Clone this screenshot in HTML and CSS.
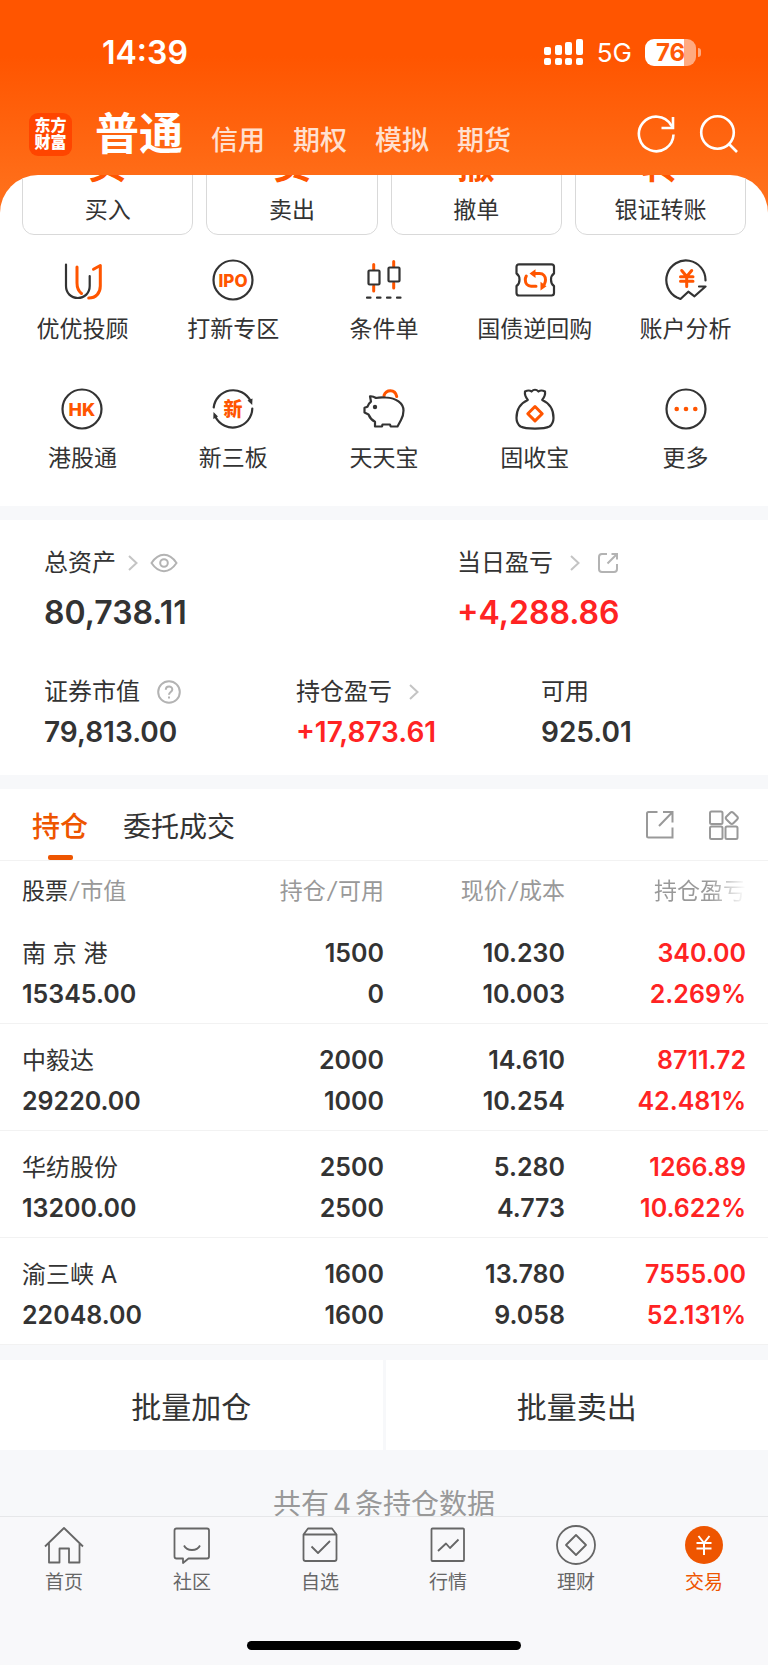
FILE: index.html
```
<!DOCTYPE html>
<html lang="zh-CN">
<head>
    <meta charset="UTF-8">
    <meta name="viewport" content="width=device-width, initial-scale=1.0">
    <title>东方财富 - 交易</title>
    <link rel="stylesheet" href="styles.css">
</head>
<body>
    <header class="header">
        <div class="status-bar">
            <span class="status-time">14:39</span>
            <div class="status-right">
                <svg class="signal" width="40" height="28" viewBox="0 0 40 28" fill="#fff">
                    <rect x="0" y="9" width="7" height="8" rx="2"/>
                    <rect x="11" y="7" width="7" height="10" rx="2"/>
                    <rect x="21" y="4" width="7" height="13" rx="2"/>
                    <rect x="32" y="1" width="7" height="16" rx="2"/>
                    <rect x="0" y="20" width="7" height="7" rx="2"/>
                    <rect x="11" y="20" width="7" height="7" rx="2"/>
                    <rect x="21" y="20" width="7" height="7" rx="2"/>
                    <rect x="32" y="20" width="7" height="7" rx="2"/>
                </svg>
                <span class="network">5G</span>
                <div class="battery"><span class="battery-level">76</span></div>
            </div>
        </div>
        <div class="nav">
            <div class="logo"><span>东方</span><span>财富</span></div>
            <nav class="nav-tabs">
                <a class="nav-tab active" href="#">普通</a>
                <a class="nav-tab" href="#">信用</a>
                <a class="nav-tab" href="#">期权</a>
                <a class="nav-tab" href="#">模拟</a>
                <a class="nav-tab" href="#">期货</a>
            </nav>
            <div class="nav-actions">
                <button class="icon-button" type="button" aria-label="刷新">
                    <svg width="40" height="40" viewBox="0 0 40 40" fill="none" stroke="#fff" stroke-width="2.6">
                        <path d="M36.5 20.5A17.3 17.3 0 1 1 34 11L36 13.5"/>
                        <path d="M36 3v11H24.5"/>
                    </svg>
                </button>
                <button class="icon-button" type="button" aria-label="搜索">
                    <svg width="40" height="40" viewBox="0 0 40 40" fill="none" stroke="#fff" stroke-width="2.6">
                        <circle cx="18.5" cy="18.5" r="16.3"/>
                        <path d="M29.5 29.5l8.5 8.5"/>
                    </svg>
                </button>
            </div>
        </div>
    </header>

    <main class="sheet">
        <section class="trade">
            <button class="trade-button" type="button"><b>买</b><span>买入</span></button>
            <button class="trade-button" type="button"><b>卖</b><span>卖出</span></button>
            <button class="trade-button" type="button"><b>撤</b><span>撤单</span></button>
            <button class="trade-button" type="button"><b>转</b><span>银证转账</span></button>
        </section>

        <section class="menu">
            <a class="menu-item" href="#">
                <svg class="menu-icon" viewBox="0 0 44 44">
                    <path d="M6 6.5V28C6 35 11 40 17.8 40S29.7 35 29.7 28V18"/>
                    <path class="accent" d="M17 9v16c0 4 1.3 8 4.5 10.5M33.5 11.3L40.3 7.5V28c0 7-4.3 12-11.6 12"/>
                </svg>
                <span>优优投顾</span>
            </a>
            <a class="menu-item" href="#">
                <svg class="menu-icon" viewBox="0 0 44 44">
                    <circle cx="22" cy="22" r="19.5"/>
                    <text x="22" y="28.5" font-size="17">IPO</text>
                </svg>
                <span>打新专区</span>
            </a>
            <a class="menu-item" href="#">
                <svg class="menu-icon" viewBox="0 0 44 44">
                    <path class="accent" d="M11.7 6.5v5M11.7 28v5M31.7 3.5v5M31.7 25v5"/>
                    <rect x="6.5" y="12.5" width="11" height="14" rx="1"/>
                    <rect x="26.5" y="9.5" width="11" height="14" rx="1"/>
                    <path d="M5 39.7h3.5M15 39.7h3.5M25 39.7h3.5M35 39.7h3.5"/>
                </svg>
                <span>条件单</span>
            </a>
            <a class="menu-item" href="#">
                <svg class="menu-icon" viewBox="0 0 44 44">
                    <path d="M6 6.3H38.5Q41 6.3 41 8.8V15.5C37 18 37 25.5 41 28V35Q41 37.5 38.5 37.5H6Q3.5 37.5 3.5 35V28C7.5 25.5 7.5 18 3.5 15.5V8.8Q3.5 6.3 6 6.3Z"/>
                    <path class="accent" d="M21 15.6h5.5c4 0 6 2.8 6 6.2 0 1.6-.4 2.8-1 4M23 28.2h-5c-3.5 0-5.7-3-5.7-6.4 0-1.5.4-2.6 1-3.8"/>
                    <path class="accent-fill" d="M16.5 15.6l6-4.4v8.8zM27.5 23.8v8.8l6-4.4z"/>
                </svg>
                <span>国债逆回购</span>
            </a>
            <a class="menu-item" href="#">
                <svg class="menu-icon" viewBox="0 0 44 44">
                    <path d="M41.5 22.5A19.6 19.6 0 1 0 13 39.5L16.5 41 24.3 33.7l6.2 4.6L41.5 28.5H35"/>
                    <path class="accent" d="M17.7 12.5l5 6 5-6M16.5 18.7h12.5M16.5 23.3h12.5M22.7 18.5V28.5"/>
                </svg>
                <span>账户分析</span>
            </a>
            <a class="menu-item" href="#">
                <svg class="menu-icon" viewBox="0 0 44 44">
                    <circle cx="22" cy="22" r="19.5"/>
                    <text x="22" y="28.5" font-size="18">HK</text>
                </svg>
                <span>港股通</span>
            </a>
            <a class="menu-item" href="#">
                <svg class="menu-icon" viewBox="0 0 44 44">
                    <path d="M2.7 20.5A19.5 19.5 0 0 1 39.5 14M41.3 21.5A19.5 19.5 0 0 1 4.5 30"/>
                    <path class="dark-fill" d="M36.5 13.5L41.5 11.5 41.2 18zM2.3 32L2.5 25 7 29.5z"/>
                    <text x="22" y="29" font-size="19">新</text>
                </svg>
                <span>新三板</span>
            </a>
            <a class="menu-item" href="#">
                <svg class="menu-icon" viewBox="0 0 44 44">
                    <path class="accent" d="M22 8.5c1-3 3.5-4.8 6.5-4.8s5.5 2.3 6.2 5.8"/>
                    <path d="M8 9.3Q11 9 14 11Q18 10 24 10.5C34 11 41.5 16 41.5 23.5Q41.5 28.5 39 33L35.5 39.5H28.7L28 37.5H20.5L20 39.5H13V34.7Q8.5 32.5 6.5 27.5L2.5 25.5V20.7L5.5 19.7Q6.5 16.5 9 14.7Z"/>
                    <circle class="dark-fill" cx="13" cy="20" r="2.2"/>
                </svg>
                <span>天天宝</span>
            </a>
            <a class="menu-item" href="#">
                <svg class="menu-icon" viewBox="0 0 44 44">
                    <path d="M14.8 13C12.5 10 11.5 7.5 12 4.5Q16 2.5 18.5 4.5Q22 1 25.5 4.5Q28 2.5 32 4.5C32.5 7.5 31.5 10 29.2 13C36 16 40.5 21.5 40.5 31Q40.5 36.5 36.5 39.5C31 42.3 13 42.3 7.5 39.5Q3.5 36.5 3.5 31C3.5 21.5 8 16 14.8 13Z"/>
                    <path class="accent" d="M22 19.5l7.2 7.2-7.2 7.2-7.2-7.2z"/>
                </svg>
                <span>固收宝</span>
            </a>
            <a class="menu-item" href="#">
                <svg class="menu-icon" viewBox="0 0 44 44">
                    <circle cx="22" cy="22" r="19.5"/>
                    <g class="accent-fill">
                        <circle cx="12.7" cy="22" r="2.3"/>
                        <circle cx="22" cy="22" r="2.3"/>
                        <circle cx="31.3" cy="22" r="2.3"/>
                    </g>
                </svg>
                <span>更多</span>
            </a>
        </section>

        <section class="assets">
            <div class="assets-row assets-main">
                <div class="asset">
                    <div class="asset-label">
                        <span>总资产</span>
                        <svg class="chevron" width="10" height="16" viewBox="0 0 10 16"><path d="M1 1l7.5 7L1 15"/></svg>
                        <svg class="asset-icon" width="28" height="24" viewBox="0 0 28 24">
                            <path d="M1.5 12Q7 3.8 14 3.8T26.5 12Q21 20.2 14 20.2T1.5 12Z"/>
                            <circle cx="14" cy="12" r="3.8"/>
                        </svg>
                    </div>
                    <strong class="asset-value">80,738.11</strong>
                </div>
                <div class="asset">
                    <div class="asset-label wide">
                        <span>当日盈亏</span>
                        <svg class="chevron" width="10" height="16" viewBox="0 0 10 16"><path d="M1 1l7.5 7L1 15"/></svg>
                        <svg class="asset-icon" width="22" height="22" viewBox="0 0 22 22">
                            <path d="M10 2H5Q2 2 2 5V17Q2 20 5 20H17Q20 20 20 17V12M14.5 2H20V7.5M20 2L10.5 11.5"/>
                        </svg>
                    </div>
                    <strong class="asset-value red">+4,288.86</strong>
                </div>
            </div>
            <div class="assets-row assets-sub">
                <div class="asset">
                    <div class="asset-label wide">
                        <span>证券市值</span>
                        <svg class="asset-icon" width="24" height="24" viewBox="0 0 24 24">
                            <circle cx="12" cy="12" r="10.8"/>
                            <path d="M8.8 9.8c0-4.2 6.5-4.2 6.5-.3 0 2.5-3.3 2.5-3.3 5.2M12 16.5v2"/>
                        </svg>
                    </div>
                    <strong class="asset-value">79,813.00</strong>
                </div>
                <div class="asset">
                    <div class="asset-label wide">
                        <span>持仓盈亏</span>
                        <svg class="chevron" width="10" height="16" viewBox="0 0 10 16"><path d="M1 1l7.5 7L1 15"/></svg>
                    </div>
                    <strong class="asset-value red">+17,873.61</strong>
                </div>
                <div class="asset">
                    <div class="asset-label"><span>可用</span></div>
                    <strong class="asset-value">925.01</strong>
                </div>
            </div>
        </section>

        <section class="holdings">
            <div class="tabs">
                <button class="tab active" type="button">持仓</button>
                <button class="tab" type="button">委托成交</button>
                <div class="tab-actions">
                    <button class="icon-button" type="button" aria-label="分享">
                        <svg width="30" height="30" viewBox="0 0 30 30" fill="none" stroke="#999" stroke-width="2">
                            <path d="M12.5 2H3.5Q2 2 2 3.5V26Q2 27.5 3.5 27.5H27.5V17.5M18 2H27.5V12.5M27.5 2L14 16"/>
                        </svg>
                    </button>
                    <button class="icon-button" type="button" aria-label="布局">
                        <svg width="30" height="30" viewBox="0 0 30 30" fill="none" stroke="#999" stroke-width="2">
                            <rect x="1" y="1.5" width="12.5" height="12.5" rx="1.5"/>
                            <rect x="1" y="16.5" width="12.5" height="12.5" rx="1.5"/>
                            <rect x="16.5" y="16.5" width="12" height="12.5" rx="1.5"/>
                            <path d="M21.3 2.7Q22.8 1.2 24.3 2.7L28.1 6.5Q29.6 8 28.1 9.5L24.3 13.3Q22.8 14.8 21.3 13.3L17.5 9.5Q16 8 17.5 6.5Z"/>
                        </svg>
                    </button>
                </div>
            </div>
            <table class="stocks">
                <thead>
                    <tr>
                        <th><em>股票</em><i>/</i>市值</th>
                        <th>持仓<i>/</i>可用</th>
                        <th>现价<i>/</i>成本</th>
                        <th><span class="fade">持仓盈亏</span></th>
                    </tr>
                </thead>
                <tbody>
                    <tr>
                        <td><span class="name">南 京 港</span><span>15345.00</span></td>
                        <td><span>1500</span><span>0</span></td>
                        <td><span>10.230</span><span>10.003</span></td>
                        <td class="red"><span>340.00</span><span>2.269%</span></td>
                    </tr>
                    <tr>
                        <td><span class="name">中毅达</span><span>29220.00</span></td>
                        <td><span>2000</span><span>1000</span></td>
                        <td><span>14.610</span><span>10.254</span></td>
                        <td class="red"><span>8711.72</span><span>42.481%</span></td>
                    </tr>
                    <tr>
                        <td><span class="name">华纺股份</span><span>13200.00</span></td>
                        <td><span>2500</span><span>2500</span></td>
                        <td><span>5.280</span><span>4.773</span></td>
                        <td class="red"><span>1266.89</span><span>10.622%</span></td>
                    </tr>
                    <tr>
                        <td><span class="name">渝三峡 A</span><span>22048.00</span></td>
                        <td><span>1600</span><span>1600</span></td>
                        <td><span>13.780</span><span>9.058</span></td>
                        <td class="red"><span>7555.00</span><span>52.131%</span></td>
                    </tr>
                </tbody>
            </table>
        </section>

        <div class="batch">
            <button class="batch-button" type="button">批量加仓</button>
            <button class="batch-button" type="button">批量卖出</button>
        </div>
        <p class="summary">共有<span class="count">4</span>条持仓数据</p>
    </main>

    <footer class="footer">
        <nav class="tab-bar">
            <a class="tab-item" href="#">
                <svg viewBox="0 0 40 40">
                    <path d="M1 21.5L20 3l19 18.5M5 18v19.5H15.5V23.5H25V37.5H35.5V18"/>
                </svg>
                <span>首页</span>
            </a>
            <a class="tab-item" href="#">
                <svg viewBox="0 0 40 40">
                    <path d="M4.5 3.5H35Q37 3.5 37 5.5V31.5Q37 33.5 35 33.5H16.5L11 38V33.5H4.5Q2.5 33.5 2.5 31.5V5.5Q2.5 3.5 4.5 3.5ZM12 20.5C15 26.5 25 26.5 28 20.5"/>
                </svg>
                <span>社区</span>
            </a>
            <a class="tab-item" href="#">
                <svg viewBox="0 0 40 40">
                    <path d="M3.5 9.5L8 3.5H32L36.5 9.5V34Q36.5 36 34.5 36H5.5Q3.5 36 3.5 34ZM3.5 9.5H36.5M11.5 21.5L18 28 30 16"/>
                </svg>
                <span>自选</span>
            </a>
            <a class="tab-item" href="#">
                <svg viewBox="0 0 40 40">
                    <rect x="3.5" y="3.5" width="32.5" height="32.5" rx="1"/>
                    <path d="M10 26l8-7.5 4 4.5L30.5 14.5"/>
                </svg>
                <span>行情</span>
            </a>
            <a class="tab-item" href="#">
                <svg viewBox="0 0 40 40">
                    <circle cx="20" cy="20" r="19"/>
                    <path d="M20 10l10 10-10 10-10-10z"/>
                </svg>
                <span>理财</span>
            </a>
            <a class="tab-item active" href="#">
                <svg viewBox="0 0 40 40">
                    <circle class="coin" cx="20" cy="20" r="19"/>
                    <path class="yen" d="M14.5 11L20 18l5.5-7M12.5 18h15M12.5 23.5h15M20 18v12"/>
                </svg>
                <span>交易</span>
            </a>
        </nav>
        <div class="home-indicator"></div>
    </footer>
</body>
</html>
```
FILE: styles.css
```
* {
    box-sizing: border-box;
}

body {
    margin: 0;
    background: #f7f8fa linear-gradient(#ff5500 56px, #ff6f1a 190px) no-repeat;
    background-size: 100% 240px;
    color: #333;
    font-family: Inter, "Noto Sans CJK SC", sans-serif;
    font-size: 23px;
}

a {
    color: inherit;
    text-decoration: none;
}

button {
    padding: 0;
    border: none;
    background: none;
    color: inherit;
    font: inherit;
    cursor: pointer;
}

svg {
    display: block;
    flex-shrink: 0;
}

.red {
    color: #ff2323;
}

/* Status bar */

.status-bar {
    display: flex;
    justify-content: space-between;
    align-items: center;
    height: 104px;
    padding: 0 72px 0 102px;
    color: #fff;
}

.status-time {
    font-size: 32px;
    font-weight: 600;
}

.status-right {
    display: flex;
    align-items: center;
    gap: 13px;
}

.network {
    font-size: 26px;
}

.battery {
    position: relative;
    width: 51px;
    height: 27px;
    border-radius: 9px;
    background: linear-gradient(to right, #fff 76%, #ffaa80 76%);
    color: #ff5a08;
    font-size: 24px;
    font-weight: 700;
    line-height: 27px;
    text-align: center;
}

.battery::after {
    content: "";
    position: absolute;
    top: 9px;
    right: -5px;
    width: 3px;
    height: 9px;
    border-radius: 0 4px 4px 0;
    background: #ffaa80;
}

/* Top navigation */

.nav {
    display: flex;
    align-items: center;
    height: 60px;
    margin-bottom: 11px;
    padding: 0 29px;
    color: #fff;
}

.logo {
    display: flex;
    flex-direction: column;
    justify-content: center;
    align-items: center;
    width: 43px;
    height: 43px;
    border-radius: 9px;
    background: #ff4500;
    font-size: 16px;
    font-weight: 900;
    line-height: 17px;
}

.nav-tabs {
    display: flex;
    align-items: baseline;
    flex: 1;
    gap: 28px;
    margin-left: 23px;
}

.nav-tab {
    color: #ffe0d0;
    font-size: 27px;
    font-weight: 500;
    line-height: 30px;
}

.nav-tab.active {
    color: #fff;
    font-size: 44px;
    font-weight: 700;
    line-height: 48px;
}

.nav-actions {
    display: flex;
    gap: 22px;
}

/* White sheet below the header */

.sheet {
    overflow: hidden;
    border-radius: 38px 38px 0 0;
    background: #fff;
}

.trade {
    display: grid;
    grid-template-columns: repeat(4, 1fr);
    gap: 13px;
    margin-top: -40px;
    padding: 0 22px;
}

.trade-button {
    display: flex;
    flex-direction: column;
    align-items: center;
    height: 100px;
    border: 1px solid #d9d9d9;
    border-radius: 12px;
    line-height: 34px;
}

.trade-button b {
    margin-bottom: 9px;
    padding-top: 8px;
    color: #ff5500;
    font-size: 38px;
    line-height: 40px;
}

.menu {
    display: grid;
    grid-template-columns: repeat(5, 1fr);
    row-gap: 43px;
    padding: 23px 7px 33px;
}

.menu-item {
    display: flex;
    flex-direction: column;
    align-items: center;
    gap: 13px;
    line-height: 29px;
}

.menu-icon {
    width: 44px;
    height: 44px;
    fill: none;
    stroke: #333;
    stroke-width: 2.2;
    stroke-linecap: round;
    stroke-linejoin: round;
}

.menu-icon .accent {
    stroke: #ff5500;
    stroke-width: 3;
}

.menu-icon .accent-fill {
    fill: #ff5500;
    stroke: none;
}

.menu-icon .dark-fill {
    fill: #333;
    stroke: none;
}

.menu-icon text {
    fill: #ff5500;
    stroke: none;
    font-weight: 800;
    text-anchor: middle;
}

/* Assets */

.assets {
    padding: 25px 44px;
    border-top: 14px solid #f7f8fa;
    border-bottom: 14px solid #f7f8fa;
}

.assets-row {
    display: grid;
}

.assets-main {
    grid-template-columns: 413px 1fr;
    margin-bottom: 41px;
}

.assets-sub {
    grid-template-columns: 252px 245px 1fr;
}

.asset-label {
    display: flex;
    align-items: center;
    gap: 12px;
    height: 36px;
    font-size: 24px;
    line-height: 36px;
}

.asset-label.wide {
    gap: 17px;
}

.asset-value {
    display: block;
    font-weight: 600;
}

.assets-main .asset-value {
    margin-top: 12px;
    font-size: 32px;
    line-height: 40px;
}

.assets-sub .asset-value {
    margin-top: 4px;
    font-size: 28px;
    line-height: 36px;
}

.chevron {
    fill: none;
    stroke: #c4c4c4;
    stroke-width: 2;
}

.asset-icon {
    fill: none;
    stroke: #b3b3b3;
    stroke-width: 2;
}

/* Holdings */

.tabs {
    display: flex;
    align-items: center;
    gap: 35px;
    height: 72px;
    padding: 0 29px 0 32px;
    border-bottom: 1px solid #f2f2f2;
}

.tab {
    position: relative;
    height: 71px;
    font-size: 28px;
}

.tab.active {
    color: #ee5500;
    font-weight: 500;
}

.tab.active::after {
    content: "";
    position: absolute;
    bottom: 0;
    left: 50%;
    width: 25px;
    height: 5px;
    margin-left: -12px;
    border-radius: 2px;
    background: #ee5500;
}

.tab-actions {
    display: flex;
    gap: 34px;
    margin-left: auto;
}

.stocks {
    width: 100%;
    border-collapse: collapse;
    table-layout: fixed;
}

.stocks th {
    height: 56px;
    padding: 0;
    color: #999;
    font-size: 23px;
    font-weight: 400;
    text-align: right;
    white-space: nowrap;
}

.stocks em {
    color: #333;
    font-style: normal;
}

.stocks i {
    margin: 0 2px;
}

.stocks td {
    padding: 16px 0 8px;
    border-bottom: 1px solid #f2f2f2;
    font-size: 25px;
    font-weight: 600;
    line-height: 41px;
    text-align: right;
}

.stocks td span {
    display: block;
}

.stocks .name {
    font-size: 24px;
    font-weight: 400;
}

.stocks th:first-child,
.stocks td:first-child {
    padding-left: 22px;
    text-align: left;
}

.stocks th:last-child,
.stocks td:last-child {
    padding-right: 22px;
}

.stocks th:first-child {
    width: 27%;
}

.stocks th:nth-child(2) {
    width: 23%;
}

.stocks th:last-child {
    width: 203px;
}

.fade {
    background: linear-gradient(to right, #999 60%, #fff);
    background-clip: text;
    color: transparent;
}

/* Batch actions */

.batch {
    display: grid;
    grid-template-columns: 1fr 1fr;
    gap: 3px;
    padding-top: 15px;
    background: #f7f8fa;
}

.batch-button {
    height: 90px;
    background: #fff;
    font-size: 30px;
}

.summary {
    height: 66px;
    margin: 0;
    padding-top: 40px;
    background: #f7f8fa;
    color: #999;
    font-size: 28px;
    line-height: 29px;
    text-align: center;
}

.count {
    margin: 0 4px;
}

/* Bottom bar */

.footer {
    height: 149px;
    border-top: 1px solid #e6e7e9;
    background: #f8f8fa;
}

.tab-bar {
    display: grid;
    grid-template-columns: repeat(6, 1fr);
    padding-top: 8px;
}

.tab-item {
    display: flex;
    flex-direction: column;
    align-items: center;
    gap: 4px;
    color: #666;
    font-size: 19px;
    line-height: 28px;
}

.tab-item svg {
    width: 40px;
    height: 40px;
    fill: none;
    stroke: #666;
    stroke-width: 1.8;
    stroke-linejoin: round;
}

.tab-item.active {
    color: #ee5500;
}

.tab-item .coin {
    fill: #ee5500;
    stroke: none;
}

.tab-item .yen {
    stroke: #fff;
    stroke-width: 2;
}

.home-indicator {
    width: 274px;
    height: 9px;
    margin: 44px auto 0;
    border-radius: 5px;
    background: #000;
}
```
